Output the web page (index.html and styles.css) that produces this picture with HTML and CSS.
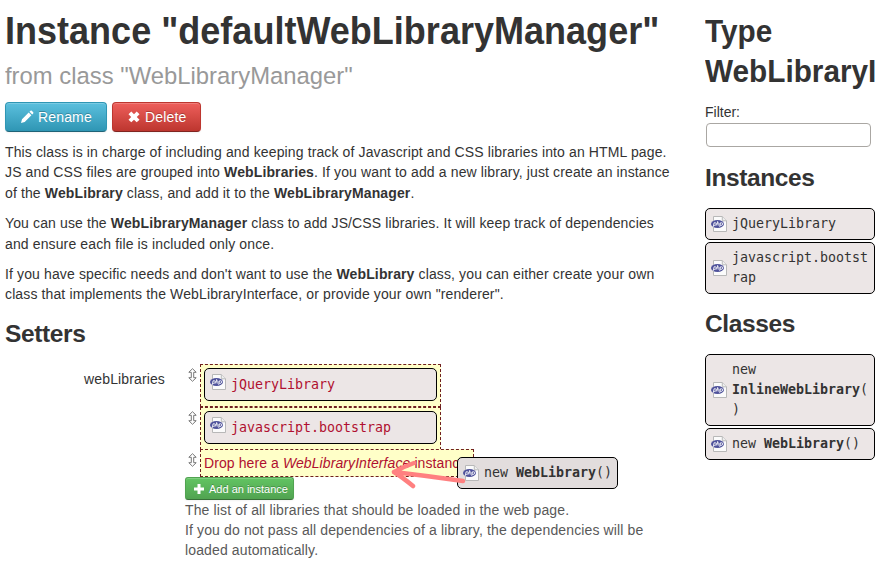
FILE: index.html
```
<!DOCTYPE html>
<html lang="en">
<head>
<meta charset="utf-8">
<title>Instance defaultWebLibraryManager</title>
<link rel="stylesheet" href="styles.css">
</head>
<body>
<svg width="0" height="0" class="defs" aria-hidden="true">
  <symbol id="php" viewBox="0 0 16 16">
    <path d="M2.500.5h8.800l4.200 4.300v10.700h-13z" fill="#fbfbfb" stroke="#b8b8b8"/>
    <path d="M11.300.5v4.300h4.200" fill="#eee" stroke="#bbb"/>
    <ellipse cx="6.500" cy="8" rx="6.500" ry="4" fill="#4f529b"/>
    <path d="M2.300 10.800l.8-4h1.200q1.300 0 1 1.300t-1.600 1.300h-.8M5.800 9.500l.9-4.300M6.400 7h1.200q.7 0 .5.800l-.4 1.700M8.700 10.800l.8-4h1.200q1.300 0 1 1.300t-1.600 1.300h-.8" fill="none" stroke="#fff" stroke-width=".9"/>
  </symbol>
  <symbol id="updown" viewBox="0 0 9 14">
    <path d="M4.500.7L8.200 4.300H5.700v5.400h2.500L4.500 13.300.8 9.700h2.500V4.300H.8z" fill="#fff" stroke="#777" stroke-width="1"/>
  </symbol>
</svg>
<div class="page">
  <main class="main">
    <h1><span class="name">Instance "defaultWebLibraryManager"</span><small><span class="origin">from class "WebLibraryManager"</span></small></h1>
    <div class="actions">
      <a class="btn info"><svg width="14" height="14" viewBox="0 0 14 14"><path d="M1 13l1-3.700L8.700 2.600l2.700 2.700L4.700 12zM9.500 1.800l1-1q.7-.5 1.300 0l1.400 1.400q.5.600 0 1.300l-1 1z" fill="#fff"/></svg>Rename</a>
      <a class="btn danger"><svg width="14" height="14" viewBox="0 0 14 14"><path d="M4.300 1.500L7 4.200l2.700-2.700 2.800 2.700L9.800 7l2.700 2.700-2.800 2.600L7 9.700l-2.700 2.600-2.800-2.600L4.200 7 1.500 4.200z" fill="#fff"/></svg>Delete</a>
    </div>
    <div class="description">
      <p>This class is in charge of including and keeping track of Javascript and CSS libraries into an HTML page.<br>JS and CSS files are grouped into <b>WebLibraries</b>. If you want to add a new library, just create an instance<br>of the <b>WebLibrary</b> class, and add it to the <b>WebLibraryManager</b>.</p>
      <p>You can use the <b>WebLibraryManager</b> class to add JS/CSS libraries. It will keep track of dependencies<br>and ensure each file is included only once.</p>
      <p>If you have specific needs and don't want to use the <b>WebLibrary</b> class, you can either create your own<br>class that implements the WebLibraryInterface, or provide your own "renderer".</p>
    </div>
    <h3>Setters</h3>
    <div class="setter">
      <label>webLibraries</label>
      <div class="controls">
        <div class="row first"><svg class="handle"><use href="#updown"/></svg><div class="slot"><div class="item"><svg class="php"><use href="#php"/></svg><span>jQueryLibrary</span></div></div></div>
        <div class="row"><svg class="handle"><use href="#updown"/></svg><div class="slot"><div class="item"><svg class="php"><use href="#php"/></svg><span>javascript.bootstrap</span></div></div></div>
        <div class="row drop"><svg class="handle"><use href="#updown"/></svg><div class="slot">Drop here a <i>WebLibraryInterface</i> instance</div></div>
        <a class="btn success"><svg width="12" height="12" viewBox="0 0 12 12"><path d="M4.500 1h3v3.500H11v3H7.500V11h-3V7.500H1v-3h3.500z" fill="#fff"/></svg>Add an instance</a>
        <div class="help">The list of all libraries that should be loaded in the web page.<br>If you do not pass all dependencies of a library, the dependencies will be<br>loaded automatically.</div>
      </div>
    </div>
  </main>
  <aside class="side">
    <h2><span>Type<br>WebLibraryInterface</span></h2>
    <label class="filter">Filter:<input type="text"></label>
    <h3>Instances</h3>
    <div class="card"><svg class="php"><use href="#php"/></svg><span>jQueryLibrary</span></div>
    <div class="card"><svg class="php"><use href="#php"/></svg><span>javascript.bootst<wbr>rap</span></div>
    <h3 class="classes">Classes</h3>
    <div class="card"><svg class="php"><use href="#php"/></svg><span class="fixed">new<br><b>InlineWebLibrary</b>(<br>)</span></div>
    <div class="card"><svg class="php"><use href="#php"/></svg><span>new <b>WebLibrary</b>()</span></div>
  </aside>
</div>
<div class="card dragged"><svg class="php"><use href="#php"/></svg><span>new <b>WebLibrary</b>()</span></div>
<svg class="arrow" viewBox="0 0 80 32"><path d="M75 24Q40 19 6 15M26 6Q15 10 6 15Q14 20 25 29" fill="none" stroke="#ff8080" stroke-width="4.500" stroke-linecap="round" stroke-linejoin="round"/></svg>
</body>
</html>
```
FILE: styles.css
```
* { box-sizing: border-box; }
body {
  margin: 0;
  height: 582px;
  overflow: hidden;
  background: #fff;
  color: #333;
  font: 14px/20px "Liberation Sans", Arial, sans-serif;
}
.defs { position: absolute; }
.page { display: flex; gap: 30px; padding: 11px 16px 0 5px; }
.main { width: 670px; flex: none; white-space: nowrap; }
.side { width: 170px; flex: none; overflow: hidden; }
h1, h2, h3 { margin: 0; line-height: 40px; font-weight: bold; }
h1 { font-size: 38.5px; }
h1 span, h2 span { display: inline-block; transform-origin: 0 0; }
h1 .name { display: block; transform: scaleX(.936); }
h1 .origin { transform: scaleX(.973); }
h2 span { transform: scaleX(.944); }
h1 small { display: block; height: 45px; padding-top: 5px; font-size: 24.5px; font-weight: normal; color: #999; }
h2 { font-size: 31.5px; }
h3 { font-size: 24.5px; letter-spacing: -.38px; }
.actions { display: flex; gap: 5px; margin-top: 6px; }
.btn {
  display: flex;
  align-items: center;
  height: 30px;
  border: 1px solid;
  border-radius: 4px;
  color: #fff;
  letter-spacing: .15px;
  text-shadow: 0 -1px 0 rgba(0, 0, 0, .25);
  box-shadow: inset 0 1px 0 rgba(255, 255, 255, .2), 0 1px 2px rgba(0, 0, 0, .05);
}
.btn svg { flex: none; margin-right: 4px; }
.info { width: 102px; padding-left: 14px; background: linear-gradient(#5bc0de, #2f96b4); border-color: #2f96b4 #2f96b4 #1f6377; }
.danger { width: 89px; padding-left: 14px; background: linear-gradient(#ee5f5b, #bd362f); border-color: #bd362f #bd362f #802420; }
.success { width: 109px; height: 23px; padding-left: 7px; font-size: 11px; letter-spacing: 0; border-radius: 3px; background: linear-gradient(#62c462, #51a351); border-color: #51a351 #51a351 #387038; }
.description { height: 172px; padding-top: 10px; line-height: 20.4px; letter-spacing: .125px; }
.description p { margin: 0 0 10px; }
.main h3 { margin-top: 10px; }
.setter { display: flex; margin-top: 10px; letter-spacing: .13px; }
.setter label { width: 160px; padding-top: 5px; text-align: right; }
.controls { margin-left: 20px; }
.row { display: flex; height: 42px; }
.first { height: 43px; }
.handle { width: 9px; height: 14px; margin: 4px 3px 0 3px; }
.slot { width: 241px; height: 43px; padding: 3px; border: 1px dashed #702020; background: #ffffc8; color: #b01030; }
.item { display: flex; height: 33px; padding: 5px 5px; border: 1px solid #000; border-radius: 5px; background: #ece6e6; }
.item span { margin-left: 5px; padding-top: 1px; }
.item span, .card span { font-family: "DejaVu Sans Mono", monospace; font-size: 13.3px; letter-spacing: 0; }
.php { flex: none; width: 16px; height: 16px; }
.drop { height: 28px; }
.drop .slot { width: 274px; height: 28px; letter-spacing: .09px; }
.help { color: #595959; }
.filter { display: block; margin-top: 11px; }
.filter input { display: block; width: 165px; height: 24px; margin: 1px 0 0 1px; border: 1px solid #aaa7a3; border-radius: 4px; background: #fff; }
.side h3 { margin: 11px 0 10px; }
.side .classes { margin-top: 10px; }
.card { display: flex; align-items: center; min-height: 32px; margin-bottom: 2px; padding: 5px 0 5px 5px; border: 1px solid #000; border-radius: 5px; background: #ece6e6; }
.card span { margin-left: 5px; }
.card .fixed { white-space: nowrap; }
.dragged { position: absolute; left: 457px; top: 457px; width: 161px; background: #e2dddd; white-space: nowrap; }
.arrow { position: absolute; left: 388px; top: 457px; width: 80px; height: 32px; }
```
